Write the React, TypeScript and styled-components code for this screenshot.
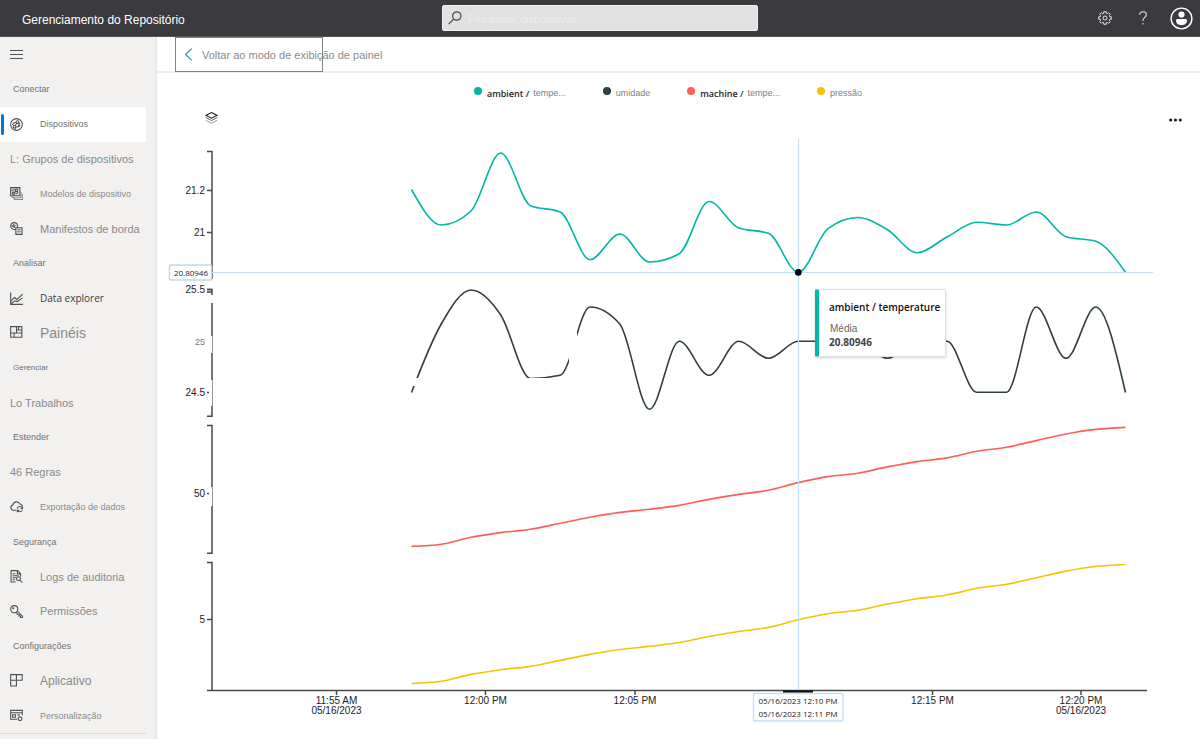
import React from "react";
import styled, { createGlobalStyle } from "styled-components";

const sans = `"Liberation Sans", Arial, sans-serif`;
const humanist = `"Open Sans", "Noto Sans", sans-serif`;

const GlobalStyle = createGlobalStyle`
  *, *::before, *::after { box-sizing: border-box; }
  body { margin: 0; background: #fff; font-family: ${sans}; }
  button { font: inherit; background: none; border: 0; padding: 0; color: inherit; cursor: pointer; }
`;

const Page = styled.div`
  display: flex;
  flex-direction: column;
  min-height: 100vh;
`;

/* ---------- Top bar ---------- */

const TopBar = styled.header`
  display: grid;
  grid-template-columns: 1fr minmax(160px, 316px) 1fr;
  align-items: center;
  height: 37px;
  background: #3b3a3f;
  border-bottom: 1px solid #55545a;
  color: #fff;
`;

const ProductName = styled.h1`
  margin: 0;
  padding: 3px 0 0 22px;
  font-size: 12px;
  font-weight: 400;
  white-space: nowrap;
`;

const SearchBox = styled.label`
  display: flex;
  align-items: center;
  gap: 6px;
  height: 26px;
  padding-left: 5px;
  border: 1px solid #f1f1f1;
  border-radius: 2px;
  background: #e1e1e1;
  color: #4a4a4a;
`;

const SearchInput = styled.input`
  flex: 1;
  min-width: 0;
  border: 0;
  outline: 0;
  padding: 2px 0 0;
  background: transparent;
  font-family: ${sans};
  font-size: 11px;
  color: #333;
  &::placeholder {
    color: #ededed;
    opacity: 1;
  }
`;

const TopActions = styled.div`
  display: flex;
  justify-content: flex-end;
  align-items: center;
`;

const IconButton = styled.button`
  display: flex;
  align-items: center;
  justify-content: center;
`;

const TopButton = styled(IconButton)`
  width: 38px;
  height: 36px;
`;

/* ---------- Side navigation ---------- */

const Body = styled.div`
  display: flex;
  flex: 1;
`;

const Sidebar = styled.aside`
  display: flex;
  flex-direction: column;
  flex: 0 0 157px;
  padding-bottom: 5px;
  background: #f2f1f0;
  border-right: 2px solid #e8e8e8;
`;

const MenuToggle = styled(IconButton)`
  width: 33px;
  height: 35px;
  color: #555;
`;

const NavList = styled.nav`
  display: flex;
  flex: 1;
  flex-direction: column;
  margin-right: 9px;
  border-bottom: 1px solid #dcdcdc;
`;

const NavHeading = styled.h2<{ $size: number }>`
  display: flex;
  flex: 1 0 28px;
  align-items: center;
  margin: 0;
  padding-left: 13px;
  font-size: ${(p) => p.$size}px;
  font-weight: 400;
  color: #707070;
`;

const NavLink = styled.a<{ $size: number; $active?: boolean; $strong?: boolean }>`
  position: relative;
  display: flex;
  flex: 1 0 28px;
  align-items: center;
  gap: 17px;
  padding-left: 10px;
  background: ${(p) => (p.$active ? "#fff" : "transparent")};
  color: ${(p) => (p.$strong ? "#3a3a3a" : p.$active ? "#707070" : "#8a8a8a")};
  font-family: ${(p) => (p.$strong ? humanist : sans)};
  font-size: ${(p) => p.$size}px;
  line-height: 16px;
  text-decoration: none;
  white-space: nowrap;

  &::before {
    content: "";
    display: ${(p) => (p.$active ? "block" : "none")};
    position: absolute;
    left: 1px;
    top: 7px;
    bottom: 7px;
    width: 3px;
    border-radius: 2px;
    background: #0078d4;
  }

  svg {
    flex: none;
    color: #505050;
  }
`;

/* ---------- Main area ---------- */

const Main = styled.main`
  flex: 1;
  min-width: 0;
  display: flex;
  flex-direction: column;
`;

const CommandBar = styled.div`
  display: flex;
  height: 36px;
  padding-left: 18px;
  border-bottom: 2px solid #eee;
`;

const BackButton = styled.button`
  display: flex;
  align-items: center;
  gap: 9px;
  width: 148px;
  height: 35px;
  padding-left: 8px;
  border: 1px solid #838383;
  color: #8a8a8a;
  font-size: 11px;
  white-space: nowrap;
  svg {
    flex: none;
  }
`;

const Legend = styled.ul`
  display: flex;
  justify-content: center;
  gap: 37px;
  margin: 0;
  padding: 10px 21px 0 0;
  height: 37px;
  list-style: none;
`;

const LegendItem = styled.li`
  display: flex;
  align-items: center;
  height: 20px;
  color: #808080;
  font-size: 9px;
`;

const LegendDot = styled.span<{ $color: string }>`
  width: 8px;
  height: 8px;
  margin: 0 5px 4px 0;
  border-radius: 50%;
  background: ${(p) => p.$color};
`;

const LegendDevice = styled.span`
  margin-right: 4px;
  color: #222;
  font-family: ${humanist};
  font-weight: 600;
`;

const ChartTools = styled.div`
  display: flex;
  justify-content: space-between;
  align-items: flex-end;
  height: 22px;
  padding: 0 18px 8px 48px;
`;

const ChartArea = styled.div`
  position: relative;
`;

const ChartSvg = styled.svg`
  display: block;
  width: 100%;
  height: auto;
`;

const AxisText = styled.text<{ $muted?: boolean }>`
  font-family: ${sans};
  font-size: ${(p) => (p.$muted ? 9 : 10)}px;
  fill: ${(p) => (p.$muted ? "#777" : "#1c1c1c")};
`;

const MarkerText = styled.text`
  font-family: ${humanist};
  font-size: 8px;
  fill: #222;
`;

const Tooltip = styled.div`
  position: absolute;
  width: 131px;
  height: 68px;
  padding: 9px 0 0 10px;
  border: 1px solid #dedede;
  border-left: 4px solid #00b8a6;
  border-radius: 2px;
  background: #fff;
  box-shadow: 0 1px 3px rgba(0, 0, 0, 0.18);
  white-space: nowrap;
`;

const TooltipTitle = styled.div`
  font: 600 10px/16px ${humanist};
  color: #111;
`;

const TooltipLabel = styled.div`
  padding: 7px 0 0 1px;
  font-size: 10px;
  line-height: 13px;
  color: #666;
`;

const TooltipValue = styled.div`
  font: 700 10px/14px ${humanist};
  color: #444;
`;

/* ---------- Icons ---------- */

const NavIcon = ({ children }: { children: React.ReactNode }) => (
  <svg width="13" height="13" viewBox="0 0 16 16" fill="none" stroke="currentColor" strokeWidth="1.3" aria-hidden="true">
    {children}
  </svg>
);

const DeviceIcon = () => (
  <NavIcon>
    <circle cx="8" cy="8" r="7.2" />
    <circle cx="9.2" cy="5" r="1.7" />
    <circle cx="5.600" cy="10.600" r="1.700" />
    <path d="M7.600 5.600C5.400 5.400 3.600 6.600 3.200 8.600M8.300 6.500 6.500 9.200M7.300 10.900c2.200.4 3.900-.6 4.300-2.500M10.500 6.200l2 .6M6.200 12.300l.6 2" />
    <circle cx="11.200" cy="9" r=".8" />
  </NavIcon>
);

const TemplateIcon = () => (
  <NavIcon>
    <path d="M.8.8h11.400v10H.8z" fill="#dedede" />
    <circle cx="8" cy="4" r="1.500" />
    <circle cx="4.500" cy="7.800" r="1.500" />
    <path d="M7 5 5.500 6.700M9 5.200c1 1.500 0 3.200-2 3.200M2.500 5c.6-1.400 1.600-2 3-2" />
    <path d="M3 11v2.200h10.600V6M5.400 13.400v1.900h10.200V8.600" stroke="#8a8a8a" />
  </NavIcon>
);

const ManifestIcon = () => (
  <NavIcon>
    <circle cx="5" cy="5" r="4.200" />
    <path d="M5 2.600 3.200 6M6.500 3.500 5 7.200M2 4.400l3 2" />
    <path d="M7.200 7h7.600v8.200H7.200z" fill="#e4e4e4" />
    <path d="M9 9.500h4M9 12h4" strokeWidth="1" />
  </NavIcon>
);

const ExplorerIcon = () => (
  <NavIcon>
    <path d="M.8.5v14.700h15M1.200 11l4.300-4.200 3.200 2.400 6.800-6.700M1.200 14.500l4.800-3.700 3 1 6.500-4.600" />
  </NavIcon>
);

const DashboardIcon = () => (
  <NavIcon>
    <path d="M.8.8h13.800v13H.8zM8 .8v8M.8 8.700h13.800M8 5h6.600M5 8.700v5M10.500 .8v4" />
  </NavIcon>
);

const ExportIcon = () => (
  <NavIcon>
    <path d="M8 12.500H4A3.300 3.300 0 0 1 3.600 6 4.600 4.600 0 0 1 12.300 5c1.700.2 2.900 1.200 3 3" />
    <path d="M9 10.500a3.200 3.200 0 0 1 6-.8M15.400 8v2.400H13M15.200 12a3.200 3.200 0 0 1-5.800 1M9 15v-2.400h2.400" />
  </NavIcon>
);

const AuditIcon = () => (
  <NavIcon>
    <path d="M7 14.700H1.300V.8h8l3.700 3.700V8M9 .8v4h4M3.200 4.500h3.600M3.200 7h7.600M3.200 9.500h4M3.200 12h3" />
    <circle cx="10.400" cy="10.800" r="2.400" />
    <path d="m12.200 12.600 3 2.800" />
  </NavIcon>
);

const KeyIcon = () => (
  <NavIcon>
    <circle cx="5.200" cy="5.200" r="4.400" />
    <circle cx="4" cy="4" r=".6" />
    <path d="m8.800 7.600 6.500 6.200v1.600h-2.400v-1.800h-1.800v-1.800H9.400L7.400 9.200" />
  </NavIcon>
);

const AppIcon = () => (
  <NavIcon>
    <path d="M.8.8h14.200v7H.8zM7.900.8v14H.8v-7" />
  </NavIcon>
);

const CustomizeIcon = () => (
  <NavIcon>
    <path d="M9 12.700H.8v-11h14.400v6M.8 4.500h14.400M3.200 7h3.600v3.200H3.200zM9 7.200h3" />
    <circle cx="12.400" cy="12" r="2.300" />
  </NavIcon>
);

/* Eight-toothed outline centred on (7, 7). */
const gearPath = (() => {
  const points: string[] = [];
  for (let k = 0; k < 8; k++) {
    const centre = (k * Math.PI) / 4;
    const corners: [number, number][] = [
      [-0.26, 4.9],
      [-0.2, 6.4],
      [0.2, 6.4],
      [0.26, 4.9],
    ];
    for (const [offset, radius] of corners) {
      points.push(`${7 + radius * Math.cos(centre + offset)},${7 + radius * Math.sin(centre + offset)}`);
    }
  }
  return `M${points.join("L")}Z`;
})();

/* ---------- Navigation data ---------- */

type NavEntry = {
  label: string;
  size: number;
  heading?: boolean;
  icon?: React.ReactNode;
  active?: boolean;
  strong?: boolean;
};

const navEntries: NavEntry[] = [
  { label: "Conectar", size: 9, heading: true },
  { label: "Dispositivos", size: 9, icon: <DeviceIcon />, active: true },
  { label: "L: Grupos de dispositivos", size: 11 },
  { label: "Modelos de dispositivo", size: 9, icon: <TemplateIcon /> },
  { label: "Manifestos de borda", size: 11, icon: <ManifestIcon /> },
  { label: "Analisar", size: 9, heading: true },
  { label: "Data explorer", size: 10, icon: <ExplorerIcon />, strong: true },
  { label: "Painéis", size: 14, icon: <DashboardIcon /> },
  { label: "Gerenciar", size: 8, heading: true },
  { label: "Lo Trabalhos", size: 11 },
  { label: "Estender", size: 9, heading: true },
  { label: "46 Regras", size: 11 },
  { label: "Exportação de dados", size: 9, icon: <ExportIcon /> },
  { label: "Segurança", size: 9, heading: true },
  { label: "Logs de auditoria", size: 11, icon: <AuditIcon /> },
  { label: "Permissões", size: 11, icon: <KeyIcon /> },
  { label: "Configurações", size: 9, heading: true },
  { label: "Aplicativo", size: 12, icon: <AppIcon /> },
  { label: "Personalização", size: 9, icon: <CustomizeIcon /> },
];

/* ---------- Chart data ---------- */

const view = { x: 157, y: 132, width: 1043, height: 607 };
const firstX = 411.5;
const stepX = 29.75;

const temperature = [
  189.5, 225, 211, 153, 205.7, 212, 259.7, 234, 262, 253.7, 201.5, 228, 233.3, 272.3, 228.7, 217.5, 229.7, 252.7, 237,
  222.2, 225, 212, 236.7, 241.3, 272.3,
];
const humidity = [
  392.5, 324, 290, 315, 378.5, 375.3, 307, 324, 409.3, 341.3, 375.3, 341.3, 358.3, 341.3, 341.3, 341.3, 358.3, 341.3,
  341.3, 392.3, 392.3, 307, 358.3, 307, 392.5,
];
const machine = [
  546.4, 544.2, 537.3, 532.6, 529.3, 523.3, 517.3, 512.4, 509.3, 505.4, 499.4, 494.4, 490.3, 482.6, 476.6, 473.2, 466.9,
  461.6, 457.9, 451.2, 447.2, 440.6, 434, 429.4, 427.4,
];
const pressure = machine.map((y) => y + 137.1);

const series = [
  { color: "#00b8a6", values: temperature },
  { color: "#2f3e44", values: humidity },
  { color: "#ff5d57", values: machine },
  { color: "#f2c500", values: pressure },
];

/* Monotone cubic interpolation over evenly spaced samples. */
function linePath(values: number[]): string {
  const slopes = values.slice(1).map((v, i) => (v - values[i]) / stepX);
  const n = values.length;
  const tangents = values.map((_, i) => {
    if (i === 0 || i === n - 1) return 0;
    const a = slopes[i - 1];
    const b = slopes[i];
    if (a * b <= 0) return 0;
    return Math.sign(a) * 2 * Math.min(Math.abs(a), Math.abs(b), 0.25 * Math.abs(a + b));
  });
  tangents[0] = (3 * slopes[0] - tangents[1]) / 2;
  tangents[n - 1] = (3 * slopes[n - 2] - tangents[n - 2]) / 2;
  const d = stepX / 3;
  let path = `M${firstX},${values[0]}`;
  for (let i = 0; i < n - 1; i++) {
    const x0 = firstX + i * stepX;
    const x1 = x0 + stepX;
    path += `C${x0 + d},${values[i] + tangents[i] * d} ${x1 - d},${values[i + 1] - tangents[i + 1] * d} ${x1},${values[i + 1]}`;
  }
  return path;
}

const yLabels = [
  { y: 190.5, text: "21.2" },
  { y: 232.5, text: "21" },
  { y: 289.5, text: "25.5" },
  { y: 341.5, text: "25", muted: true },
  { y: 392.5, text: "24.5", short: true },
  { y: 493.5, text: "50", short: true },
  { y: 619.5, text: "5" },
];

const xLabels = [
  { x: 336.5, lines: ["11:55 AM", "05/16/2023"] },
  { x: 485.5, lines: ["12:00 PM"] },
  { x: 635, lines: ["12:05 PM"] },
  { x: 932.5, lines: ["12:15 PM"] },
  { x: 1081, lines: ["12:20 PM", "05/16/2023"] },
];

const Chart = () => (
  <ChartArea>
    <ChartSvg viewBox={`${view.x} ${view.y} ${view.width} ${view.height}`} role="img" aria-label="Telemetria">
      <g stroke="#4a4a4a" strokeWidth="1.5" fill="none">
        <path d="M207 151.500h5V279" />
        <path d="M207 292h5M207 289.500h5V295M212 303v33M212 353v27M212 406v10.300h-5" />
        <path d="M207 425.500h5V487M212 506v47.300h-5" />
        <path d="M207 562.500h5V690.500M207 690.500H1147" />
        <path d="M212.500 336v17M212.500 380v26M212.500 487v19" strokeWidth="1" stroke="#999" />
        {yLabels
          .filter((l) => !l.muted)
          .map((l) => (
            <path key={l.text} d={`M207 ${l.y}h${l.short ? 2 : 5}`} />
          ))}
        {xLabels.map((l) => (
          <path key={l.x} d={`M${l.x} 690.500v4.500`} />
        ))}
      </g>

      {yLabels.map((l) => (
        <AxisText key={l.text} x="205" y={l.y + 3.5} textAnchor="end" $muted={l.muted}>
          {l.text}
        </AxisText>
      ))}
      {xLabels.map((l) =>
        l.lines.map((line, i) => (
          <AxisText key={l.x + line} x={l.x} y={704 + i * 10} textAnchor="middle">
            {line}
          </AxisText>
        ))
      )}

      {series.map((s) => (
        <path key={s.color} d={linePath(s.values)} fill="none" stroke={s.color} strokeWidth="1.6" />
      ))}
      <path d="M405 378h164v8H405zM569 300h8v86h-8z" fill="#fff" />

      <path d="M212 272.500h941M798.500 139v551" stroke="#c3e0f5" strokeWidth="1.200" />
      <circle cx="798.300" cy="272.400" r="3.300" fill="#000" />
      <path d="M783 691.500h30" stroke="#111" strokeWidth="2.400" />

      <rect x="169.500" y="265" width="42" height="15" rx="1" fill="#fff" stroke="#bfd9ea" strokeWidth="1.400" />
      <MarkerText x="208" y="276" textAnchor="end">
        20.80946
      </MarkerText>
      <rect x="753.500" y="693.500" width="89.500" height="27.500" rx="1" fill="#fff" stroke="#c3e0f5" strokeWidth="1.400" />
      <MarkerText x="798" y="704" textAnchor="middle">
        05/16/2023 12:10 PM
      </MarkerText>
      <MarkerText x="798" y="717" textAnchor="middle">
        05/16/2023 12:11 PM
      </MarkerText>
    </ChartSvg>
    <Tooltip
      role="tooltip"
      style={{
        left: `${((815 - view.x) / view.width) * 100}%`,
        top: `${((289 - view.y) / view.height) * 100}%`,
      }}
    >
      <TooltipTitle>ambient / temperature</TooltipTitle>
      <TooltipLabel>Média</TooltipLabel>
      <TooltipValue>20.80946</TooltipValue>
    </Tooltip>
  </ChartArea>
);

const legendItems = [
  { color: "#00b8a6", device: "ambient /", label: "tempe..." },
  { color: "#2f3e44", label: "umidade" },
  { color: "#ff5d57", device: "machine /", label: "tempe..." },
  { color: "#f2c500", label: "pressão" },
];

export default function App() {
  return (
    <Page>
      <GlobalStyle />
      <TopBar>
        <ProductName>Gerenciamento do Repositório</ProductName>
        <SearchBox>
          <svg width="14" height="14" viewBox="0 0 14 14" fill="none" stroke="currentColor" strokeWidth="1.200" aria-hidden="true">
            <circle cx="8.800" cy="5" r="4.200" />
            <path d="M5.800 8 .6 13.200" />
          </svg>
          <SearchInput type="search" aria-label="Pesquisar dispositivos" placeholder="Pesquisar dispositivos" />
        </SearchBox>
        <TopActions>
          <TopButton aria-label="Configurações">
            <svg width="14" height="14" viewBox="0 0 14 14" fill="none" stroke="#e4e4e4" strokeLinejoin="round">
              <path d={gearPath} />
              <circle cx="7" cy="7" r="2" />
            </svg>
          </TopButton>
          <TopButton aria-label="Ajuda">
            <svg width="10" height="14" viewBox="0 0 10 14" fill="none" stroke="#e4e4e4" strokeWidth="1.100">
              <path d="M1.700 3.800C1.700 1.900 3 .8 5 .8s3.300 1.100 3.300 2.900C8.300 6.300 5 6.400 5 9.400v.7M5 12v1.500" />
            </svg>
          </TopButton>
          <TopButton aria-label="Conta">
            <svg width="23" height="23" viewBox="0 0 23 23">
              <circle cx="11.500" cy="11.500" r="10.400" fill="none" stroke="#fff" strokeWidth="1.400" />
              <circle cx="11.500" cy="7.500" r="3.100" fill="#fff" />
              <path d="M6 13.600c0-1 .6-1.600 1.600-1.600h7.800c1 0 1.600.6 1.600 1.600 0 2.900-2.400 4.700-5.500 4.700S6 16.500 6 13.600z" fill="#fff" />
            </svg>
          </TopButton>
        </TopActions>
      </TopBar>

      <Body>
        <Sidebar>
          <MenuToggle aria-label="Menu">
            <svg width="13" height="9" viewBox="0 0 13 9" stroke="currentColor">
              <path d="M0 .5h13M0 4.500h13M0 8.500h13" />
            </svg>
          </MenuToggle>
          <NavList>
            {navEntries.map((e) =>
              e.heading ? (
                <NavHeading key={e.label} $size={e.size}>
                  {e.label}
                </NavHeading>
              ) : (
                <NavLink key={e.label} href="#" $size={e.size} $active={e.active} $strong={e.strong}>
                  {e.icon}
                  {e.label}
                </NavLink>
              )
            )}
          </NavList>
        </Sidebar>

        <Main>
          <CommandBar>
            <BackButton>
              <svg width="9" height="13" viewBox="0 0 9 13" fill="none" stroke="#2b88d8" strokeWidth="1.200" aria-hidden="true">
                <path d="M7.700.6 1.600 6.500l6.100 5.900" />
              </svg>
              Voltar ao modo de exibição de painel
            </BackButton>
          </CommandBar>
          <Legend>
            {legendItems.map((item) => (
              <LegendItem key={item.color}>
                <LegendDot $color={item.color} />
                {item.device && <LegendDevice>{item.device}</LegendDevice>}
                <span>{item.label}</span>
              </LegendItem>
            ))}
          </Legend>
          <ChartTools>
            <IconButton aria-label="Camadas">
              <svg width="13" height="12" viewBox="0 0 13 12" fill="none">
                <path d="M6.500.6 12 3.400 6.500 6.200 1 3.400z" stroke="#222" strokeWidth="1.100" />
                <path d="m.6 5.500 5.900 3 5.900-3" stroke="#666" />
                <path d="m.6 8.200 5.900 3 5.900-3" stroke="#999" />
              </svg>
            </IconButton>
            <IconButton aria-label="Mais opções">
              <svg width="13" height="8" viewBox="0 0 13 8" fill="#1c1c1c">
                <circle cx="1.700" cy="4" r="1.600" />
                <circle cx="6.500" cy="4" r="1.600" />
                <circle cx="11.300" cy="4" r="1.600" />
              </svg>
            </IconButton>
          </ChartTools>
          <Chart />
        </Main>
      </Body>
    </Page>
  );
}
